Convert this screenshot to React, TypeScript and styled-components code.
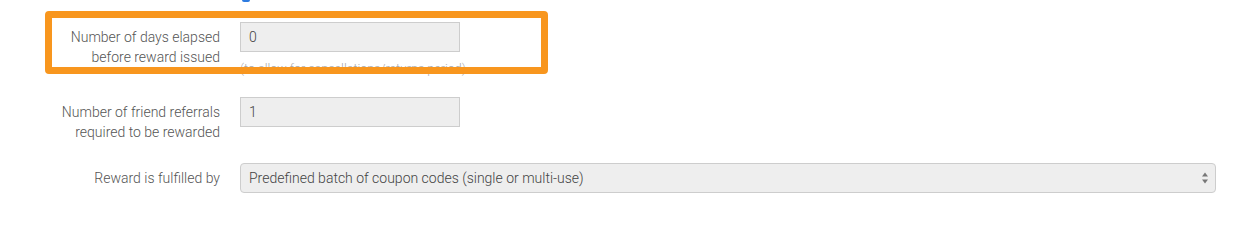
import React, { FunctionComponent } from 'react'
import styled, { createGlobalStyle } from 'styled-components'

const GlobalStyle = createGlobalStyle`
  html, body {
    margin: 0;
    padding: 0;
    background: #fff;
  }
  body {
    font-family: Roboto, 'Liberation Sans', Arial, sans-serif;
    width: 1240px;
    height: 227px;
    overflow: hidden;
  }
`

const Page = styled.div`
  position: relative;
  display: flex;
  flex-direction: column;
  padding: 0 24px 0 0;
`

const TopMarker = styled.div`
  margin-left: 242px;
  width: 8px;
  height: 2px;
  background: #2d7be0;
  border-radius: 0 0 2px 2px;
`

const Form = styled.div`
  display: flex;
  flex-direction: column;
  gap: 21px;
  padding-top: 20px;
`

const Row = styled.div`
  display: grid;
  grid-template-columns: 220px 1fr;
  column-gap: 20px;
  align-items: start;
`

const Label = styled.label`
  padding-top: 5px;
  text-align: right;
  font-size: 14px;
  font-weight: 300;
  line-height: 20px;
  color: #555;
`

const Field = styled.div`
  display: flex;
  flex-direction: column;
`

const TextInput = styled.div<{ $width?: number }>`
  box-sizing: border-box;
  width: ${(p) => (p.$width ? `${p.$width}px` : '100%')};
  height: 30px;
  padding: 0 8px;
  display: flex;
  align-items: center;
  background: #eeeeee;
  border: 1px solid #cdcdcd;
  font-size: 14px;
  font-weight: 300;
  color: #444;
`

const Hint = styled.div`
  margin-top: 10px;
  font-size: 12.5px;
  font-weight: 300;
  line-height: 14px;
  color: #a8a8a8;
`

const SelectBox = styled.div`
  box-sizing: border-box;
  height: 30px;
  padding: 0 6px 0 8px;
  display: flex;
  align-items: center;
  justify-content: space-between;
  background: #eeeeee;
  border: 1px solid #cdcdcd;
  border-radius: 4px;
  font-size: 14px;
  font-weight: 300;
  color: #444;
`

// annotation frame drawn over the first row
const Highlight = styled.div`
  position: absolute;
  left: 45px;
  top: 11px;
  width: 503px;
  height: 63px;
  box-sizing: border-box;
  border: 7px solid #f8961e;
  border-radius: 4px;
  pointer-events: none;
`

const SelectArrows: FunctionComponent = () => (
  <svg width='8' height='12' viewBox='0 0 8 12'>
    <path d='M4 0.5 L7 4.5 L1 4.5 Z' fill='#777' />
    <path d='M4 11.5 L7 7.5 L1 7.5 Z' fill='#777' />
  </svg>
)

const App: FunctionComponent = () => {
  return (
    <>
      <GlobalStyle />
      <Page>
        <TopMarker />
        <Form>
          <Row>
            <Label>
              Number of days elapsed
              <br />
              before reward issued
            </Label>
            <Field>
              <TextInput $width={220}>0</TextInput>
              <Hint>(to allow for cancellations/returns period)</Hint>
            </Field>
          </Row>
          <Row>
            <Label>
              Number of friend referrals
              <br />
              required to be rewarded
            </Label>
            <Field>
              <TextInput $width={220}>1</TextInput>
            </Field>
          </Row>
          <Row>
            <Label>Reward is fulfilled by</Label>
            <Field>
              <SelectBox>
                <span>Predefined batch of coupon codes (single or multi-use)</span>
                <SelectArrows />
              </SelectBox>
            </Field>
          </Row>
        </Form>
        <Highlight />
      </Page>
    </>
  )
}

export default App
